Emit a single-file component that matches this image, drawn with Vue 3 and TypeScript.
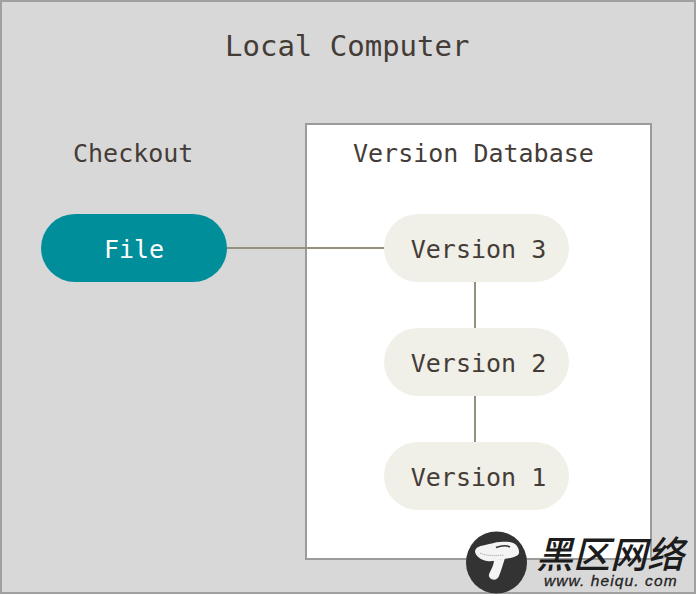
<script setup lang="ts">
interface Pill { label: string; top: number }
const versions: Pill[] = [
  { label: 'Version 3', top: 214 },
  { label: 'Version 2', top: 328 },
  { label: 'Version 1', top: 442 },
]
</script>

<template>
  <div class="canvas">
    <div class="local">
      <div class="title">Local Computer</div>
      <div class="checkout">Checkout</div>
      <div class="db"><div class="db-title">Version Database</div></div>
      <div class="hline"></div>
      <div class="vline"></div>
      <div class="pill file">File</div>
      <div v-for="v in versions" :key="v.label" class="pill version" :style="{ top: v.top + 'px' }">{{ v.label }}</div>
    </div>
    <div class="mark">
      <svg class="logo" width="62" height="63" viewBox="0 0 62 63">
        <ellipse cx="30.5" cy="31.5" rx="30.5" ry="31" fill="#333333" />
        <path d="M9 20 C10 16 14 15 19 14 C25 13 29 11 34 11 C41 10 48 11 51 15 C53 18 54 22 52 24 C48 27 43 27 38 28 C31 29 26 31 21 30 C15 29 9 25 9 20 Z" fill="#f4f4f4" />
        <path d="M28 29 C32 29 36 28 39 27 C37 33 35 40 33 45 C31 50 26 49 24 47 C22 45 23 43 24 41 C26 37 28 33 28 29 Z" fill="#f4f4f4" />
        <path d="M30 16.5 C34 15 40 14 44 16" stroke="#333" stroke-width="1.6" fill="none" />
        <path d="M14 22 C20 25 30 25 38 24" stroke="#9a9a9a" stroke-width="1" stroke-dasharray="1 1" fill="none" />
      </svg>
      <div class="brand">
        <div class="cn">黑区网络</div>
        <div class="url">www. heiqu. com</div>
      </div>
    </div>
  </div>
</template>

<style>
html, body { margin: 0; background: #fff; }
</style>

<style scoped>
.canvas { position: relative; width: 698px; height: 596px; overflow: hidden; background: #fff; }
.local {
  position: relative; width: 696px; height: 594px; box-sizing: border-box;
  background: #d9d8d9; border: 2px solid #a0a0a0;
  font-family: "DejaVu Sans Mono", monospace; color: #443c36; font-size: 25px; line-height: 30px;
}
.title { position: absolute; left: 223px; top: 27px; font-size: 29px; line-height: 34px; white-space: nowrap; }
.checkout { position: absolute; left: 71px; top: 137px; white-space: nowrap; }
.db { position: absolute; left: 303px; top: 121px; width: 347px; height: 437px; box-sizing: border-box; background: #fff; border: 2px solid #9b9b9b; }
.db-title { position: absolute; left: 46px; top: 14px; white-space: nowrap; }
.hline { position: absolute; left: 222px; top: 245px; width: 162px; height: 2px; background: #96907f; }
.vline { position: absolute; left: 472px; top: 246px; width: 2px; height: 228px; background: #96907f; }
.pill { position: absolute; box-sizing: border-box; height: 68px; border-radius: 34px; display: flex; align-items: center; justify-content: center; white-space: nowrap; padding-top: 4px; }
.file { left: 39px; top: 212px; width: 186px; background: #008e9b; color: #fdfdfb; }
.version { left: 382px; width: 185px; margin-top: -2px; padding-left: 4px; background: #f0efe8; }
.mark { position: absolute; left: 466px; top: 531px; display: flex; align-items: flex-start; gap: 12px; }
.logo { display: block; }
.brand { display: flex; flex-direction: column; align-items: flex-start; }
.cn { font-family: "Noto Sans CJK SC", sans-serif; font-weight: 500; font-size: 37px; line-height: 42px; color: #1c1c1c; transform: skewX(-14deg); white-space: nowrap; }
.url { font-family: "Liberation Sans", sans-serif; font-style: italic; font-size: 15.5px; line-height: 18px; color: #222; -webkit-text-stroke: 0.3px #222; letter-spacing: 1.1px; white-space: nowrap; margin-left: 4px; margin-top: -1px; }
</style>
